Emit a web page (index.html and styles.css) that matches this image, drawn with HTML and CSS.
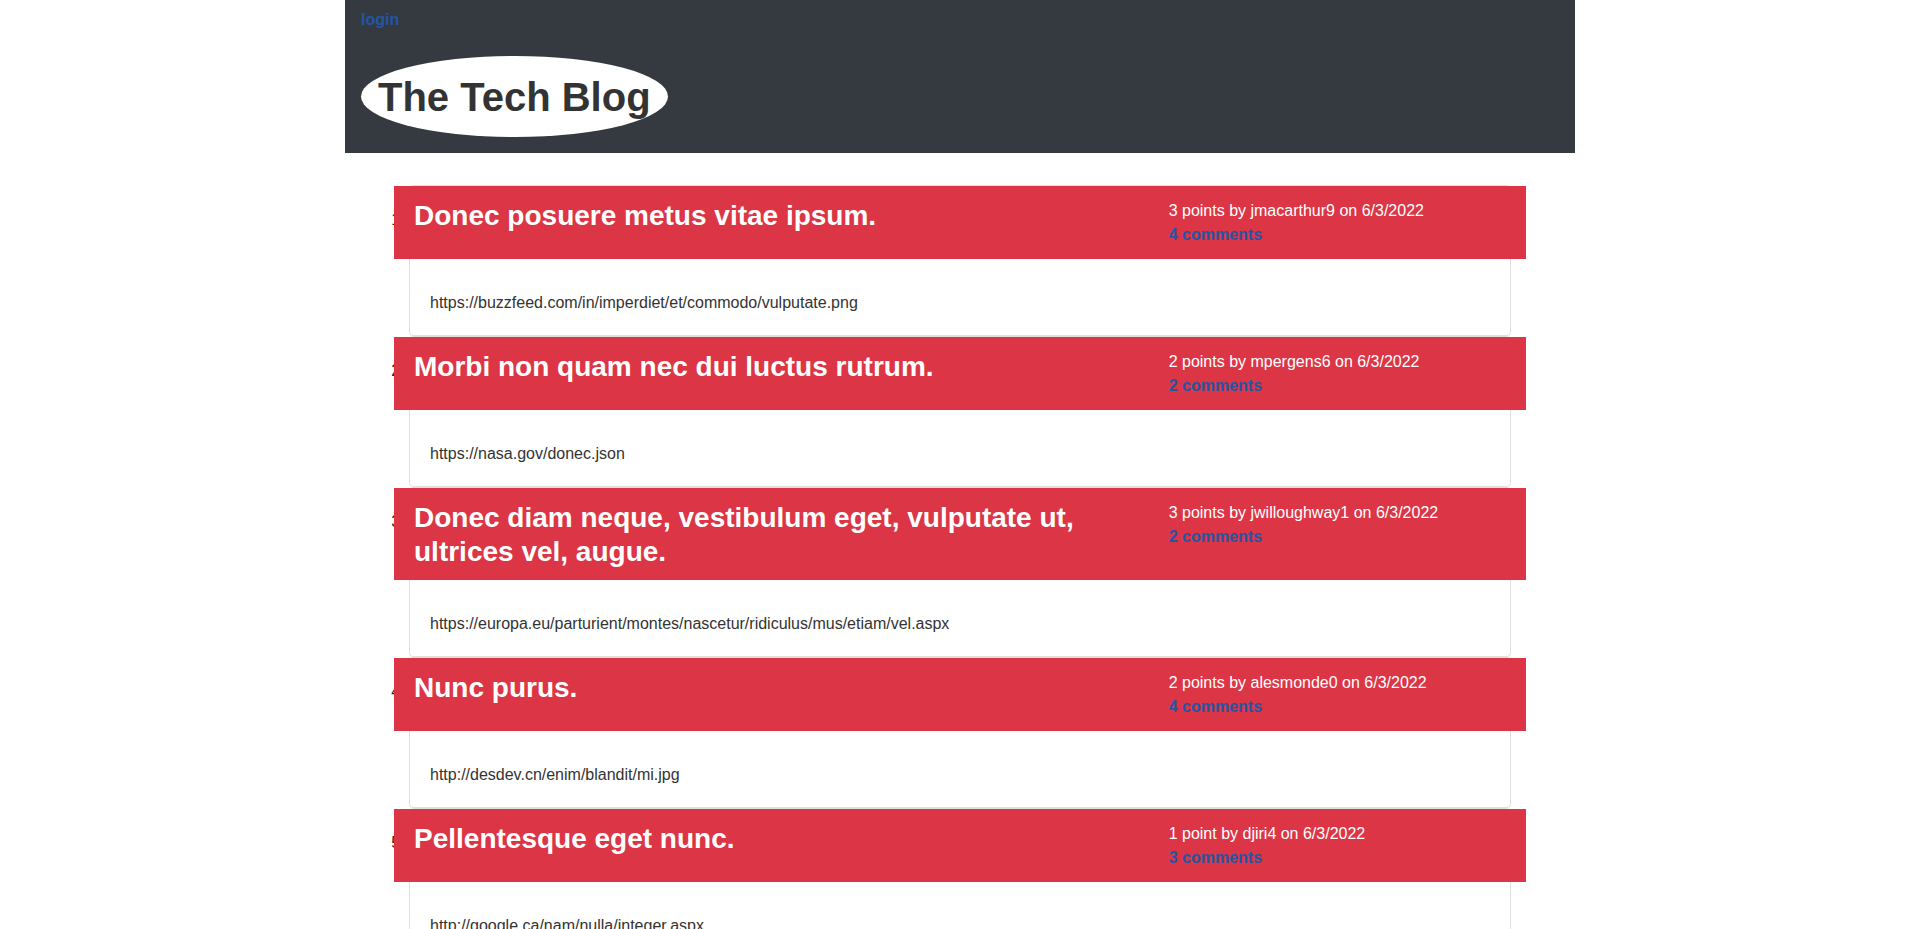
FILE: index.html
```html
<!DOCTYPE html>
<html lang="en">
<head>
<meta charset="utf-8">
<title>The Tech Blog</title>
<link rel="stylesheet" href="styles.css">
</head>
<body>
<div class="page">
  <header class="site-header">
    <nav class="nav"><a class="nav-link" href="#">login</a></nav>
    <h1 class="brand">The Tech Blog</h1>
  </header>
  <main class="main">
    <ol class="posts">
      <li class="post">
        <div class="card">
          <div class="card-head">
            <div class="col-title"><h3 class="post-title">Donec posuere metus vitae ipsum.</h3></div>
            <div class="col-meta">
              <div class="meta-line">3 points by jmacarthur9 on 6/3/2022</div>
              <a class="comments" href="#">4 comments</a>
            </div>
          </div>
          <div class="card-body"><p class="url">https://buzzfeed.com/in/imperdiet/et/commodo/vulputate.png</p></div>
        </div>
      </li>
      <li class="post">
        <div class="card">
          <div class="card-head">
            <div class="col-title"><h3 class="post-title">Morbi non quam nec dui luctus rutrum.</h3></div>
            <div class="col-meta">
              <div class="meta-line">2 points by mpergens6 on 6/3/2022</div>
              <a class="comments" href="#">2 comments</a>
            </div>
          </div>
          <div class="card-body"><p class="url">https://nasa.gov/donec.json</p></div>
        </div>
      </li>
      <li class="post">
        <div class="card">
          <div class="card-head">
            <div class="col-title"><h3 class="post-title">Donec diam neque, vestibulum eget, vulputate ut, ultrices vel, augue.</h3></div>
            <div class="col-meta">
              <div class="meta-line">3 points by jwilloughway1 on 6/3/2022</div>
              <a class="comments" href="#">2 comments</a>
            </div>
          </div>
          <div class="card-body"><p class="url">https://europa.eu/parturient/montes/nascetur/ridiculus/mus/etiam/vel.aspx</p></div>
        </div>
      </li>
      <li class="post">
        <div class="card">
          <div class="card-head">
            <div class="col-title"><h3 class="post-title">Nunc purus.</h3></div>
            <div class="col-meta">
              <div class="meta-line">2 points by alesmonde0 on 6/3/2022</div>
              <a class="comments" href="#">4 comments</a>
            </div>
          </div>
          <div class="card-body"><p class="url">http://desdev.cn/enim/blandit/mi.jpg</p></div>
        </div>
      </li>
      <li class="post">
        <div class="card">
          <div class="card-head">
            <div class="col-title"><h3 class="post-title">Pellentesque eget nunc.</h3></div>
            <div class="col-meta">
              <div class="meta-line">1 point by djiri4 on 6/3/2022</div>
              <a class="comments" href="#">3 comments</a>
            </div>
          </div>
          <div class="card-body"><p class="url">http://google.ca/nam/nulla/integer.aspx</p></div>
        </div>
      </li>
    </ol>
  </main>
</div>
</body>
</html>
```

FILE: styles.css
```css
* { box-sizing: border-box; }

html, body {
  margin: 0;
  padding: 0;
  background: #ffffff;
}

body {
  font-family: "Liberation Sans", Arial, sans-serif;
  font-size: 16px;
  line-height: 1.5;
  color: #212529;
}

.page {
  width: 1230px;
  margin: 0 auto;
}

.site-header {
  background: #343a40;
  padding: 8px 16px 16px;
}

.nav {
  height: 24px;
  line-height: 24px;
}

.nav-link {
  color: #2455a4;
  font-weight: bold;
  text-decoration: none;
}

.brand {
  display: inline-block;
  margin: 24px 0 0;
  padding: 16.5px 17px;
  background: #ffffff;
  border-radius: 50%;
  font-size: 40px;
  font-weight: bold;
  line-height: 1.2;
  color: #333333;
}

.main {
  padding: 16px 24px;
}

.posts {
  margin: 16px 0 0;
  padding: 0 40px;
}

.post {
  margin: 0;
}

.card {
  border: 1px solid #dfdfdf;
  border-radius: 4px;
  background: #ffffff;
}

.card-head {
  position: relative;
  display: flex;
  margin: 0 -16px;
  padding: 13px 0 3px;
  background: #dc3545;
  color: #ffffff;
}

.col-title {
  flex: 0 0 66.6667%;
  padding: 0 20px;
}

.col-meta {
  flex: 0 0 33.3333%;
  padding: 0 20px;
  margin-bottom: 9px;
}

.post-title {
  margin: 0 0 9px;
  font-size: 28px;
  font-weight: bold;
  line-height: 1.2;
}

.meta-line {
  line-height: 24px;
}

.comments {
  display: block;
  line-height: 24px;
  color: #2455a4;
  font-weight: bold;
  text-decoration: none;
}

.card-body {
  padding: 32px 20px 20px;
}

.url {
  margin: 0;
  line-height: 24px;
  color: #333333;
}
```
